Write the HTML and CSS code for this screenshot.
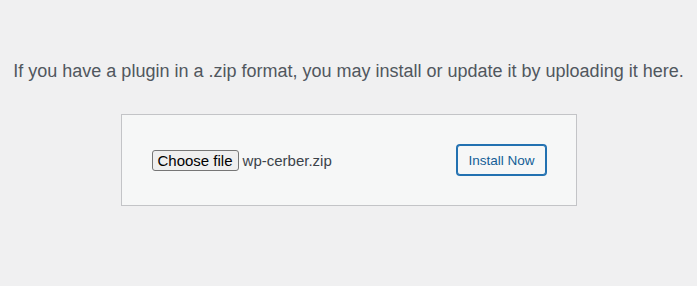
FILE: index.html
```html
<!DOCTYPE html>
<html lang="en">

<head>
    <meta charset="UTF-8">
    <meta name="viewport" content="width=device-width, initial-scale=1.0">
    <title>Upload Plugin</title>
    <link rel="stylesheet" href="styles.css">
</head>

<body>
    <div class="upload-plugin">
        <p class="install-help">If you have a plugin in a .zip format, you may install or update it by uploading it here.</p>
        <form class="wp-upload-form">
            <div class="file-field">
                <span class="choose-btn">Choose file</span>
                <span class="file-name">wp-cerber.zip</span>
            </div>
            <button type="button" class="button">Install Now</button>
        </form>
    </div>
</body>

</html>
```

FILE: styles.css
```css
body {
    margin: 0;
    background: #f0f0f1;
    color: #3c434a;
    font-family: "Liberation Sans", Arial, sans-serif;
}

.upload-plugin {
    text-align: center;
}

.install-help {
    color: #50575e;
    font-size: 18px;
    margin: 0;
    padding: 58px 0 0;
    line-height: 26px;
}

.wp-upload-form {
    display: inline-flex;
    justify-content: space-between;
    align-items: center;
    box-sizing: border-box;
    width: 456px;
    height: 92px;
    margin: 30px auto 0;
    padding: 30px;
    background: #f6f7f7;
    border: 1px solid #c3c4c7;
}

.file-field {
    display: flex;
    align-items: center;
    font-size: 15px;
}

.choose-btn {
    box-sizing: border-box;
    height: 21px;
    padding: 0 5px;
    line-height: 19px;
    color: #000;
    background: #efefef;
    border: 1px solid #767676;
    border-radius: 3px;
}

.file-name {
    margin-left: 4px;
    color: #3c434a;
}

.button {
    box-sizing: border-box;
    height: 30px;
    padding: 0 10px;
    font-family: inherit;
    font-size: 13.5px;
    color: #135e96;
    background: #f6f7f7;
    border: 1px solid #2271b1;
    border-radius: 3px;
    box-shadow: 0 0 0 1px #2271b1;
}
```
